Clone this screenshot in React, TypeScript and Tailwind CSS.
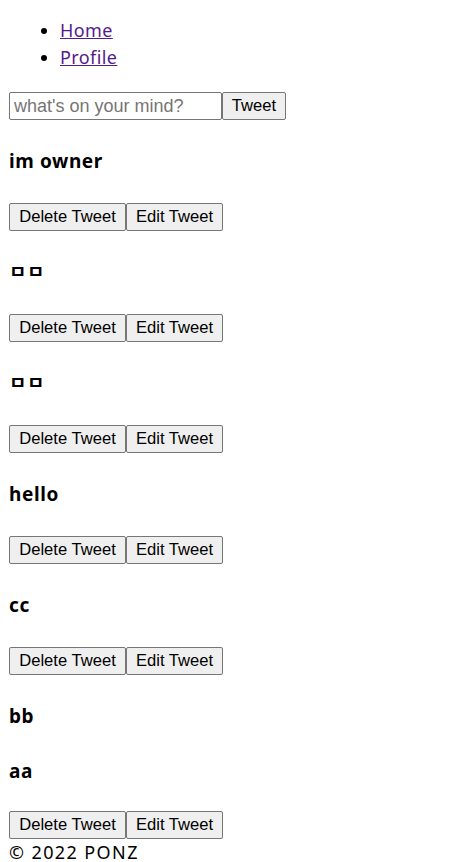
import React from "react";

const tweets: { text: string; owner: boolean }[] = [
  { text: "im owner", owner: true },
  { text: "ㅁㅁ", owner: true },
  { text: "ㅁㅁ", owner: true },
  { text: "hello", owner: true },
  { text: "cc", owner: true },
  { text: "bb", owner: false },
  { text: "aa", owner: true },
];

const btn =
  "h-[28px] bg-[#efefef] border border-[#767676] rounded-[2px] text-[16.6px] text-black leading-none font-['Liberation_Sans',Arial,sans-serif] text-center p-0";

export default function App() {
  return (
    <div className="bg-white min-h-[862px] px-[8px] text-[18px] leading-[27px] text-black font-['Noto_Sans','Noto_Sans_CJK_KR',sans-serif]">
      <ul className="list-disc pl-[52px] pt-[17px] mb-[21px]">
        <li>
          <a href="#" className="text-[#551a8b] underline tracking-[0.4px]">Home</a>
        </li>
        <li>
          <a href="#" className="text-[#551a8b] underline tracking-[0.4px]">Profile</a>
        </li>
      </ul>
      <form className="flex items-start" onSubmit={(e) => e.preventDefault()}>
        <input
          type="text"
          placeholder="what's on your mind?"
          className="w-[213px] h-[28px] border border-[#767676] rounded-[2px] px-[4px] text-[18px] font-['Liberation_Sans',Arial,sans-serif] placeholder:text-[#757575] outline-none ml-[1px]"
        />
        <button type="submit" className={btn + " w-[64px]"}>Tweet</button>
      </form>
      <div>
        {tweets.map((t, i) => (
          <div key={i}>
            <h4 className="font-bold text-[19px] leading-[27px] my-[28px] tracking-[0.6px] ml-[1px] font-['Noto_Sans','Noto_Sans_CJK_KR',sans-serif]">
              {t.text}
            </h4>
            {t.owner && (
              <div className={"flex ml-[1px]" + (i === tweets.length - 1 ? " -mt-[2px]" : "")}>
                <button className={btn + " w-[117px]"}>Delete Tweet</button>
                <button className={btn + " w-[97px]"}>Edit Tweet</button>
              </div>
            )}
          </div>
        ))}
      </div>
      <footer className="ml-[1px] tracking-[1.4px]">© 2022 PONZ</footer>
    </div>
  );
}
